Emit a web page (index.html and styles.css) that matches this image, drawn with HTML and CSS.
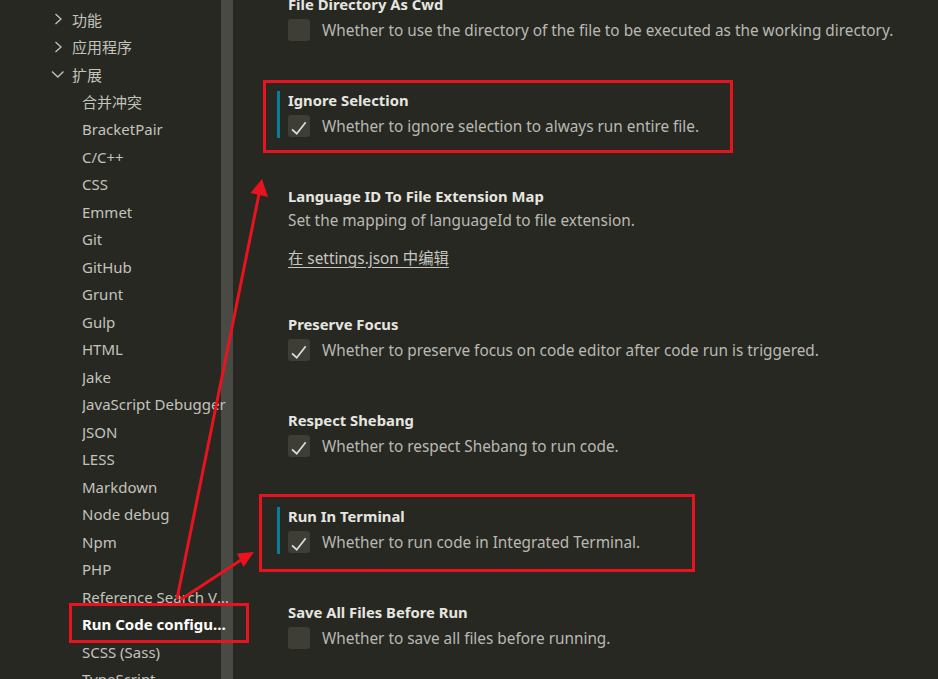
FILE: index.html
```html
<!DOCTYPE html>
<html lang="zh-CN">
<head>
<meta charset="utf-8">
<title>Settings</title>
<link rel="stylesheet" href="styles.css">
</head>
<body>
<div class="app">
  <nav class="tree">
    <div class="scroll-thumb"></div>
    <div class="row lvl0"><svg class="chev" viewBox="0 0 20 20"><path d="M7.5 5 L13 10 L7.5 15"/></svg><span class="lbl">功能</span></div>
    <div class="row lvl0"><svg class="chev" viewBox="0 0 20 20"><path d="M7.5 5 L13 10 L7.5 15"/></svg><span class="lbl">应用程序</span></div>
    <div class="row lvl0"><svg class="chev" viewBox="0 0 20 20"><path d="M4 7.5 L9.8 13 L15.5 7.5"/></svg><span class="lbl">扩展</span></div>
    <div class="row lvl1"><span class="lbl">合并冲突</span></div>
    <div class="row lvl1"><span class="lbl">BracketPair</span></div>
    <div class="row lvl1"><span class="lbl">C/C++</span></div>
    <div class="row lvl1"><span class="lbl">CSS</span></div>
    <div class="row lvl1"><span class="lbl">Emmet</span></div>
    <div class="row lvl1"><span class="lbl">Git</span></div>
    <div class="row lvl1"><span class="lbl">GitHub</span></div>
    <div class="row lvl1"><span class="lbl">Grunt</span></div>
    <div class="row lvl1"><span class="lbl">Gulp</span></div>
    <div class="row lvl1"><span class="lbl">HTML</span></div>
    <div class="row lvl1"><span class="lbl">Jake</span></div>
    <div class="row lvl1"><span class="lbl">JavaScript Debugger</span></div>
    <div class="row lvl1"><span class="lbl">JSON</span></div>
    <div class="row lvl1"><span class="lbl">LESS</span></div>
    <div class="row lvl1"><span class="lbl">Markdown</span></div>
    <div class="row lvl1"><span class="lbl">Node debug</span></div>
    <div class="row lvl1"><span class="lbl">Npm</span></div>
    <div class="row lvl1"><span class="lbl">PHP</span></div>
    <div class="row lvl1"><span class="lbl">Reference Search View</span></div>
    <div class="row lvl1 active"><span class="lbl">Run Code configuration</span></div>
    <div class="row lvl1"><span class="lbl">SCSS (Sass)</span></div>
    <div class="row lvl1"><span class="lbl">TypeScript</span></div>
  </nav>

  <main class="settings">
    <section class="item">
      <div class="body">
        <div class="title">File Directory As Cwd</div>
        <div class="check-row"><span class="cb"></span><span class="desc">Whether to use the directory of the file to be executed as the working directory.</span></div>
      </div>
    </section>
    <section class="item">
      <div class="body modified">
        <div class="title">Ignore Selection</div>
        <div class="check-row"><span class="cb"><svg viewBox="0 0 22 22"><path d="M4 14.3 L8.7 18.7 L17.7 7.3"/></svg></span><span class="desc">Whether to ignore selection to always run entire file.</span></div>
      </div>
    </section>
    <section class="item tall">
      <div class="body">
        <div class="title">Language ID To File Extension Map</div>
        <div class="desc-row">Set the mapping of languageId to file extension.</div>
        <a class="edit-link">在 settings.json 中编辑</a>
      </div>
    </section>
    <section class="item">
      <div class="body">
        <div class="title">Preserve Focus</div>
        <div class="check-row"><span class="cb"><svg viewBox="0 0 22 22"><path d="M4 14.3 L8.7 18.7 L17.7 7.3"/></svg></span><span class="desc">Whether to preserve focus on code editor after code run is triggered.</span></div>
      </div>
    </section>
    <section class="item">
      <div class="body">
        <div class="title">Respect Shebang</div>
        <div class="check-row"><span class="cb"><svg viewBox="0 0 22 22"><path d="M4 14.3 L8.7 18.7 L17.7 7.3"/></svg></span><span class="desc">Whether to respect Shebang to run code.</span></div>
      </div>
    </section>
    <section class="item">
      <div class="body modified">
        <div class="title">Run In Terminal</div>
        <div class="check-row"><span class="cb"><svg viewBox="0 0 22 22"><path d="M4 14.3 L8.7 18.7 L17.7 7.3"/></svg></span><span class="desc">Whether to run code in Integrated Terminal.</span></div>
      </div>
    </section>
    <section class="item">
      <div class="body">
        <div class="title">Save All Files Before Run</div>
        <div class="check-row"><span class="cb"></span><span class="desc">Whether to save all files before running.</span></div>
      </div>
    </section>
  </main>

  <svg class="annot" viewBox="0 0 938 679">
    <g class="box">
      <rect x="264.5" y="81.5" width="467" height="70"/>
      <rect x="260.5" y="495.5" width="433" height="75"/>
      <rect x="70.5" y="604.5" width="177" height="37"/>
    </g>
    <g class="arrow">
      <line x1="177" y1="599" x2="259" y2="194"/>
      <polygon points="262,179 250.5,193 268,197"/>
      <line x1="180" y1="600" x2="241" y2="560"/>
      <polygon points="254,552 237,553.5 243.5,567"/>
    </g>
  </svg>
</div>
</body>
</html>
```

FILE: styles.css
```css
* { box-sizing: border-box; }

html, body {
  margin: 0;
  padding: 0;
  background: #272822;
  overflow: hidden;
}

.app {
  position: relative;
  width: 938px;
  height: 679px;
  display: flex;
  overflow: hidden;
  font-family: "Noto Sans", "Noto Sans CJK SC", sans-serif;
}

/* ---------- tree ---------- */
.tree {
  position: relative;
  flex: 0 0 233px;
  width: 233px;
  padding-top: 5.25px;
  color: #c3c3bd;
  font-size: 15px;
}

.scroll-thumb {
  position: absolute;
  left: 221px;
  top: 0;
  width: 12px;
  height: 100%;
  background: #4a4a45;
}

.row {
  position: relative;
  height: 27.5px;
  display: flex;
  align-items: center;
  white-space: nowrap;
}

.row .lbl {
  overflow: hidden;
  text-overflow: ellipsis;
  white-space: nowrap;
}

.lvl0 { padding-left: 48px; }
.lvl1 { padding-left: 82px; }
.lvl1 .lbl { max-width: 150px; }

.chev {
  width: 20px;
  height: 20px;
  margin-right: 4px;
  flex: 0 0 20px;
}
.chev path {
  fill: none;
  stroke: #c3c3bd;
  stroke-width: 1.3;
}

.active { color: #ffffff; font-weight: 700; }

/* ---------- settings ---------- */
.settings {
  flex: 1;
  margin-top: -5px;
  padding-left: 44px;
  display: flex;
  flex-direction: column;
}

.item {
  height: 96px;
  flex: 0 0 96px;
}
.item.tall {
  height: 128px;
  flex: 0 0 128px;
}

.body {
  border-left: 3px solid transparent;
  padding-left: 8px;
}
.body.modified { border-left-color: #0f7b9c; }

.title {
  height: 20px;
  line-height: 18px;
  font-size: 14.8px;
  font-weight: 700;
  color: #e6e6e0;
  white-space: nowrap;
}

.check-row {
  margin-top: 3px;
  height: 24px;
  display: flex;
  align-items: center;
  gap: 12px;
}

.cb {
  width: 22px;
  height: 22px;
  flex: 0 0 22px;
  border-radius: 3px;
  background: #3e3e37;
  display: flex;
}
.cb svg { width: 22px; height: 22px; }
.cb path {
  fill: none;
  stroke: #dcdcd6;
  stroke-width: 1.8;
}

.desc, .desc-row {
  font-size: 15.35px;
  color: #b9b9b3;
  white-space: nowrap;
}

.desc-row {
  height: 24px;
  line-height: 24px;
  margin-top: 1px;
}

.edit-link {
  display: inline-block;
  margin-top: 15px;
  height: 22px;
  line-height: 22px;
  font-size: 15.35px;
  color: #c6c6c0;
  text-decoration: underline;
  text-underline-offset: 3px;
  white-space: nowrap;
}

/* ---------- annotations ---------- */
.annot {
  position: absolute;
  left: 0;
  top: 0;
  width: 938px;
  height: 679px;
  pointer-events: none;
}
.annot .box rect {
  fill: none;
  stroke: #e8131f;
  stroke-width: 3;
}
.annot .arrow line {
  stroke: #e8131f;
  stroke-width: 3;
}
.annot .arrow polygon {
  fill: #e8131f;
}
```
